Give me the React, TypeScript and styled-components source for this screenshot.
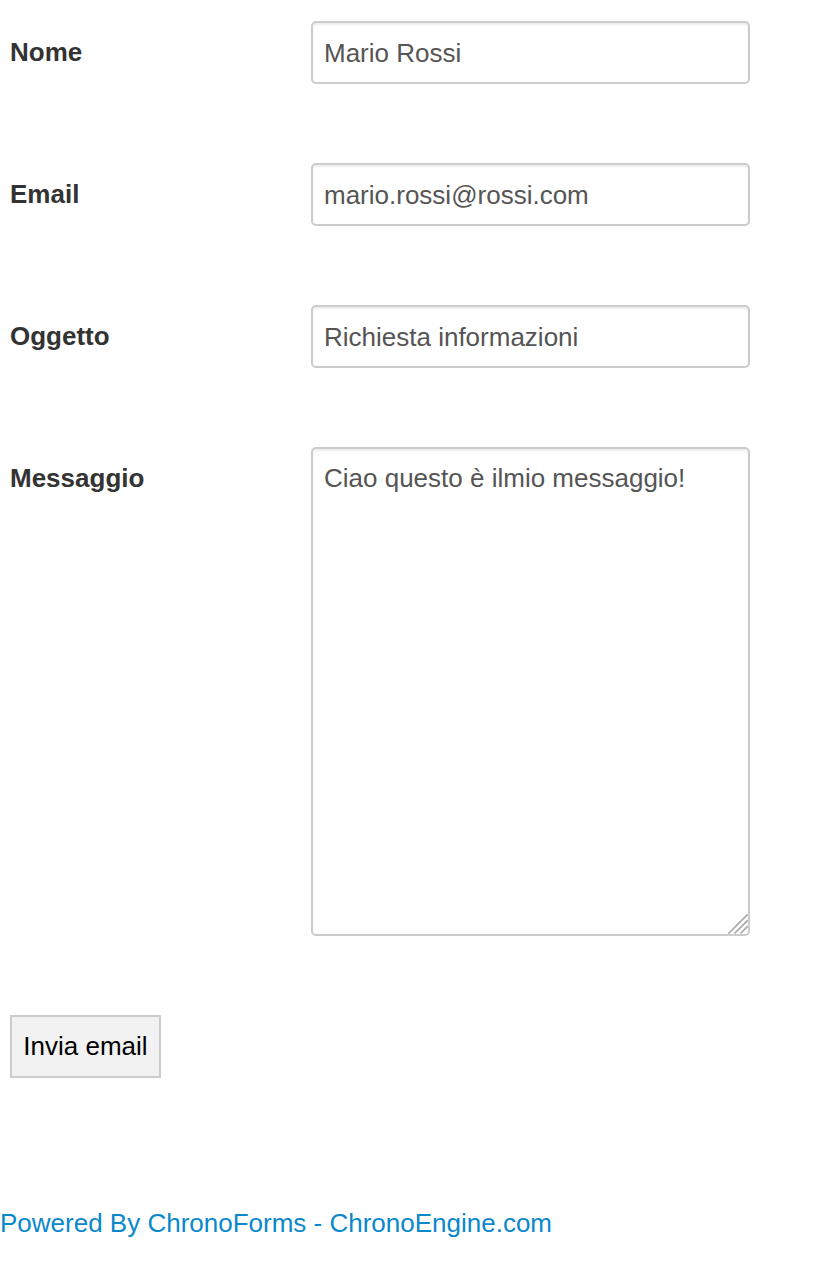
import React from 'react'
import styled, { createGlobalStyle } from 'styled-components'

const GlobalStyle = createGlobalStyle`
  body {
    margin: 0;
    background: #ffffff;
    font-family: "Liberation Sans", Arial, Helvetica, sans-serif;
  }
`

const Form = styled.form`
  display: flex;
  flex-direction: column;
  padding-top: 21px;
`

const Row = styled.div`
  display: flex;
  flex-direction: row;
  align-items: flex-start;
  margin-bottom: 79px;
`

const Label = styled.label`
  width: 301px;
  padding-left: 10px;
  padding-top: 16px;
  font-size: 26px;
  line-height: 30px;
  font-weight: bold;
  color: #333333;
`

const fieldStyles = `
  box-sizing: border-box;
  width: 439px;
  margin: 0;
  border: 2px solid #cccccc;
  border-radius: 5px;
  background: #ffffff;
  box-shadow: inset 0 2px 2px rgba(0, 0, 0, 0.075);
  color: #555555;
  font-family: "Liberation Sans", Arial, Helvetica, sans-serif;
  font-size: 26px;
  line-height: 30px;
  outline: none;
`

const TextInput = styled.input`
  ${fieldStyles}
  height: 63px;
  padding: 1px 11px 0;
`

const AreaWrap = styled.div`
  position: relative;
  width: 439px;
  height: 489px;
`

const TextArea = styled.textarea`
  ${fieldStyles}
  display: block;
  height: 489px;
  padding: 14px 11px;
  resize: none;
`

const Grip = styled.svg`
  position: absolute;
  right: 2px;
  bottom: 2px;
  width: 20px;
  height: 20px;
  pointer-events: none;
`

const Submit = styled.button`
  align-self: flex-start;
  box-sizing: border-box;
  margin-left: 10px;
  width: 151px;
  height: 63px;
  padding: 0;
  border: 2px solid #cccccc;
  border-radius: 0;
  background: #f2f2f2;
  color: #000000;
  font-family: "Liberation Sans", Arial, Helvetica, sans-serif;
  font-size: 26px;
  white-space: nowrap;
  cursor: pointer;
`

const Footer = styled.div`
  margin-top: 130px;
`

const FooterLink = styled.a`
  color: #0a88cc;
  font-size: 26px;
  line-height: 30px;
  text-decoration: none;
`

interface Field {
  label: string;
  value: string;
  multiline?: boolean;
}

const fields: Field[] = [
  { label: 'Nome', value: 'Mario Rossi' },
  { label: 'Email', value: 'mario.rossi@rossi.com' },
  { label: 'Oggetto', value: 'Richiesta informazioni' },
  { label: 'Messaggio', value: 'Ciao questo è ilmio messaggio!', multiline: true },
]

const App: React.FC = () => {
  return (
    <>
      <GlobalStyle />
      <Form onSubmit={(e) => e.preventDefault()}>
        {fields.map((field) => (
          <Row key={field.label}>
            <Label>{field.label}</Label>
            {field.multiline
              ? (
                <AreaWrap>
                  <TextArea defaultValue={field.value} />
                  <Grip viewBox="0 0 20 20">
                    <g stroke="#a8a8a8" strokeWidth="1.6" strokeLinecap="square">
                      <line x1="1" y1="19" x2="19" y2="1" />
                      <line x1="7" y1="19" x2="19" y2="7" />
                      <line x1="13" y1="19" x2="19" y2="13" />
                    </g>
                    <g stroke="#ffffff" strokeWidth="1">
                      <line x1="3" y1="19" x2="19" y2="3" />
                      <line x1="9" y1="19" x2="19" y2="9" />
                      <line x1="15" y1="19" x2="19" y2="15" />
                    </g>
                  </Grip>
                </AreaWrap>
              )
              : <TextInput type="text" defaultValue={field.value} />}
          </Row>
        ))}
        <Submit type="submit">Invia email</Submit>
        <Footer>
          <FooterLink href="#">Powered By ChronoForms - ChronoEngine.com</FooterLink>
        </Footer>
      </Form>
    </>
  )
}

export default App
